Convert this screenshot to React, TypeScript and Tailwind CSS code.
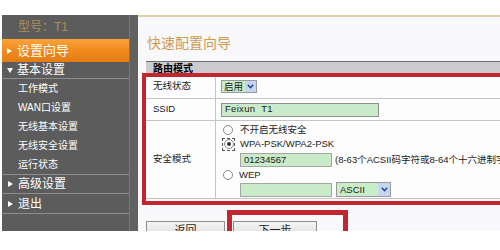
import React from "react";

const F = { fontFamily: '"Liberation Sans", "Noto Sans CJK SC", sans-serif' };

function TriRight() {
  return (
    <svg width="5" height="6" viewBox="0 0 5 6" className="shrink-0">
      <polygon points="0,0 5,3 0,6" fill="#ffffff" />
    </svg>
  );
}
function TriDown() {
  return (
    <svg width="6" height="5" viewBox="0 0 6 5" className="shrink-0">
      <polygon points="0,0 6,0 3,5" fill="#ffffff" />
    </svg>
  );
}

function Radio({ checked }: { checked?: boolean }) {
  return (
    <span className="flex h-[10px] w-[10px] items-center justify-center rounded-full border border-[#8a8a8a] bg-white shrink-0">
      {checked && <span className="h-[4px] w-[4px] rounded-full bg-[#333]" />}
    </span>
  );
}

function Chevron() {
  return (
    <svg width="7" height="5" viewBox="0 0 7 5">
      <polyline points="0.8,0.8 3.5,3.8 6.2,0.8" fill="none" stroke="#1f3f8f" strokeWidth="1.4" />
    </svg>
  );
}

export default function App() {
  return (
    <div className="relative h-[250px] w-[500px] overflow-hidden bg-white" style={F}>
      <div className="mt-[15px] flex h-[216px] overflow-hidden">
        {/* Sidebar */}
        <div className="ml-[2px] flex w-[136px] shrink-0 bg-[#5c5c5c]">
          <div className="flex w-[127px] flex-col">
            <div className="flex h-[24px] items-center pl-[16px] text-[12px] text-[#b28c55]">型号：T1</div>
            <div className="flex h-[23px] items-center gap-[5px] bg-gradient-to-b from-[#f9a43a] via-[#f08a1c] to-[#e57c12] pl-[5px] text-[13px] text-white">
              <TriRight />
              <span>设置向导</span>
            </div>
            <div className="flex h-[16px] items-center gap-[4px] pl-[5px] text-[12px] text-white">
              <TriDown />
              <span>基本设置</span>
            </div>
            <div className="h-px bg-[#8d8d8d]" />
            {["工作模式", "WAN口设置", "无线基本设置", "无线安全设置", "运行状态"].map((t) => (
              <div key={t} className="flex h-[19px] items-center pl-[16px] text-[10px] text-white">
                {t}
              </div>
            ))}
            <div className="h-px bg-[#8d8d8d]" />
            <div className="flex h-[18px] items-center gap-[5px] pl-[6px] text-[12px] text-white">
              <TriRight />
              <span>高级设置</span>
            </div>
            <div className="h-px bg-[#8d8d8d]" />
            <div className="flex h-[19px] items-center gap-[5px] pl-[6px] text-[12px] text-white">
              <TriRight />
              <span>退出</span>
            </div>
            <div className="h-px bg-[#8d8d8d]" />
          </div>
          <div className="w-px bg-[#767676]" />
          <div className="flex-1 bg-[#616161]" />
        </div>

        {/* Main */}
        <div className="relative flex-1 overflow-hidden border-t-2 border-[#ddd0ab] bg-[#f9f9fb]">
          <div className="pl-[9px] pt-[18px] text-[14px] leading-[16px] text-[#d39a4e]">快速配置向导</div>
          <div className="ml-[8px] mt-[10px] w-[420px] text-[9.5px] text-[#222]">
            <div className="flex h-[13px] items-center border-t border-[#6b6b6b] bg-[#cbcbd0] pl-[7px] text-[10px] font-bold text-black">路由模式</div>
            {/* Row 1 */}
            <div className="flex h-[25px] border-b border-[#c4c4c4] bg-[#fdfdfd]">
              <div className="flex w-[70px] items-center border-r border-[#c4c4c4] pl-[7px]">无线状态</div>
              <div className="flex items-center pl-[5px]">
                <div className="flex h-[13px] items-center border border-[#9a9a9a] bg-[#c9ecc9]">
                  <span className="px-[2px] leading-[11px]">启用</span>
                  <span className="flex h-[11px] w-[11px] items-center justify-center bg-[#c7d6ef]">
                    <Chevron />
                  </span>
                </div>
              </div>
            </div>
            {/* Row 2 */}
            <div className="flex h-[22px] border-b border-[#c4c4c4] bg-[#fdfdfd]">
              <div className="flex w-[70px] items-center border-r border-[#c4c4c4] pl-[7px]">SSID</div>
              <div className="flex items-center pl-[5px]">
                <div className="flex h-[14px] w-[158px] items-center border border-[#8f8f8f] bg-[#c9ebc9] pl-[3px] tracking-[0.3px]">Feixun&nbsp;&nbsp;T1</div>
              </div>
            </div>
            {/* Row 3 */}
            <div className="flex h-[78px] border-b border-[#c4c4c4] bg-[#fdfdfd]">
              <div className="flex w-[70px] items-center border-r border-[#c4c4c4] pl-[7px]">安全模式</div>
              <div className="flex flex-col pl-[6px] pt-[3px]">
                <div className="flex h-[12px] items-center gap-[7px] pl-[1px]">
                  <Radio />
                  <span>不开启无线安全</span>
                </div>
                <div className="mt-[2px] flex h-[12px] items-center gap-[5px]">
                  <span className="flex h-[13px] w-[13px] items-center justify-center border border-dashed border-[#555]">
                    <Radio checked />
                  </span>
                  <span>WPA-PSK/WPA2-PSK</span>
                </div>
                <div className="mt-[3px] flex items-center whitespace-nowrap pl-[18px]">
                  <div className="flex h-[14px] w-[92px] items-center border border-[#a5a5a5] bg-[#c9ebc9] pl-[3px]">01234567</div>
                  <span className="ml-[3px]">(8-63个ACSII码字符或8-64个十六进制字符)</span>
                </div>
                <div className="mt-[2px] flex h-[12px] items-center gap-[6px] pl-[1px]">
                  <Radio />
                  <span>WEP</span>
                </div>
                <div className="mt-[1px] flex items-center pl-[18px]">
                  <div className="h-[14px] w-[92px] border border-[#a5a5a5] bg-[#c9ebc9]" />
                  <div className="ml-[4px] flex h-[15px] w-[55px] items-center justify-between border border-[#9a9a9a] bg-[#c9ecc9] pl-[3px]">
                    <span>ASCII</span>
                    <span className="flex h-[13px] w-[12px] items-center justify-center bg-[#c7d6ef]">
                      <Chevron />
                    </span>
                  </div>
                </div>
              </div>
            </div>
            {/* Buttons */}
            <div className="mt-[22px] flex gap-[8px]">
              <div className="flex h-[18px] w-[79px] items-center justify-center border border-[#8d8d8d] bg-gradient-to-b from-[#f4f4f4] to-[#dcdcdc] text-[11px]">返回</div>
              <div className="flex h-[18px] w-[84px] items-center justify-center border border-[#8d8d8d] bg-gradient-to-b from-[#f4f4f4] to-[#dcdcdc] text-[11px]">下一步</div>
            </div>
          </div>

          {/* Red annotation boxes */}
          <div className="absolute left-[4px] top-[56px] h-[132px] w-[380px] border-4 border-[#c4262f]" />
          <div className="absolute left-[89px] top-[193px] h-[50px] w-[121px] border-[5px] border-[#c4262f]" />
        </div>
      </div>
    </div>
  );
}
